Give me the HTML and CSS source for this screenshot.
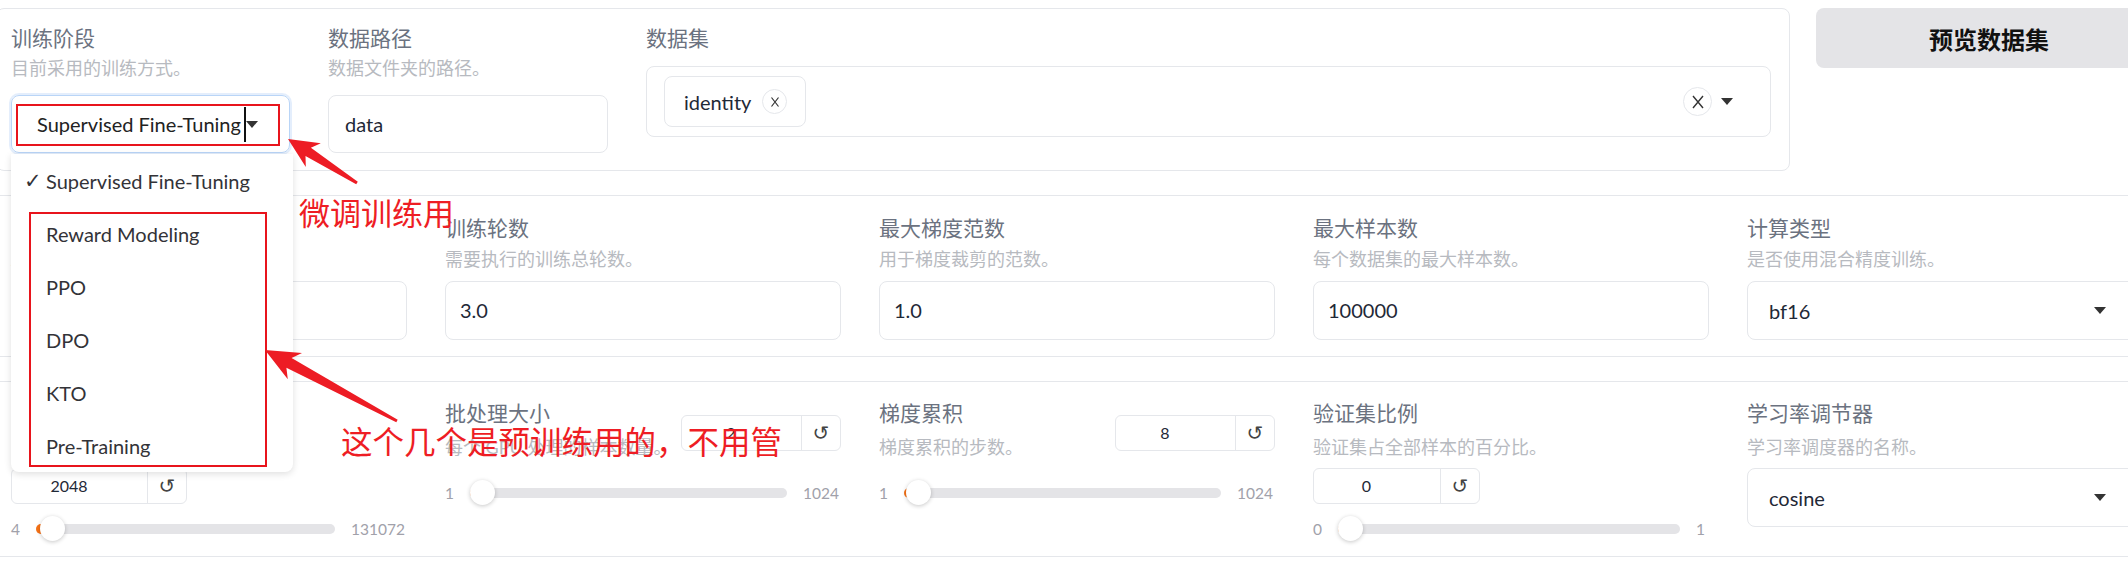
FILE: index.html
```html
<!DOCTYPE html>
<html lang="zh">
<head>
<meta charset="utf-8">
<title>Train</title>
<link rel="stylesheet" href="styles.css">
</head>
<body>
<div class="page">
  <div class="top">
    <div class="form form-top">
      <div class="field c279">
        <div class="lbl">训练阶段</div>
        <div class="info">目前采用的训练方式。</div>
        <div class="select focused">
          <span class="sel-text">Supervised Fine-Tuning</span><span class="cursor"></span>
          <span class="caret"></span>
        </div>
      </div>
      <div class="field c280">
        <div class="lbl">数据路径</div>
        <div class="info">数据文件夹的路径。</div>
        <div class="text-in tall1">data</div>
      </div>
      <div class="field c1125">
        <div class="lbl">数据集</div>
        <div class="multi">
          <span class="chip"><span>identity</span><span class="chip-x"><svg width="10" height="12" viewBox="0 0 10 12"><path d="M1.5 1.5L8.5 10.5M8.5 1.5L1.5 10.5" stroke="#333" stroke-width="1.2" fill="none"/></svg></span></span>
          <span class="spacer"></span>
          <span class="clear"><svg width="14" height="16" viewBox="0 0 14 16"><path d="M2 2L12 14M12 2L2 14" stroke="#333" stroke-width="1.4" fill="none"/></svg></span>
          <span class="caret"></span>
        </div>
      </div>
    </div>
    <button class="btn">预览数据集</button>
  </div>

  <div class="form row2">
    <div class="field c396">
      <div class="lbl">学习率</div>
      <div class="info">AdamW 优化器的初始学习率。</div>
      <div class="text-in">5e-5</div>
    </div>
    <div class="field c396">
      <div class="lbl">训练轮数</div>
      <div class="info">需要执行的训练总轮数。</div>
      <div class="text-in">3.0</div>
    </div>
    <div class="field c396">
      <div class="lbl">最大梯度范数</div>
      <div class="info">用于梯度裁剪的范数。</div>
      <div class="text-in">1.0</div>
    </div>
    <div class="field c396">
      <div class="lbl">最大样本数</div>
      <div class="info">每个数据集的最大样本数。</div>
      <div class="text-in">100000</div>
    </div>
    <div class="field c396">
      <div class="lbl">计算类型</div>
      <div class="info">是否使用混合精度训练。</div>
      <div class="select">
        <span class="sel-text">bf16</span>
        <span class="caret"></span>
      </div>
    </div>
  </div>

  <div class="form row3">
    <div class="field c396">
      <div class="lbl">截断长度</div>
      <div class="info">输入序列分词后的最大长度。</div>
      <div class="numbox nb-a"><span class="num-val">2048</span><span class="reset">↺</span></div>
      <div class="slider s-low">
        <span class="smin">4</span>
        <div class="track" style="--f:0.0156"><div class="fill"></div><div class="thumb"></div></div>
        <span class="smax">131072</span>
      </div>
    </div>
    <div class="field c396">
      <div class="shead">
        <div>
          <div class="lbl">批处理大小</div>
          <div class="info">每个 GPU 处理的样本数量。</div>
        </div>
        <div class="numbox nb-b"><span class="num-val">2</span><span class="reset">↺</span></div>
      </div>
      <div class="slider s-top">
        <span class="smin">1</span>
        <div class="track" style="--f:0.001"><div class="fill"></div><div class="thumb"></div></div>
        <span class="smax">1024</span>
      </div>
    </div>
    <div class="field c396">
      <div class="shead">
        <div>
          <div class="lbl">梯度累积</div>
          <div class="info">梯度累积的步数。</div>
        </div>
        <div class="numbox nb-b"><span class="num-val">8</span><span class="reset">↺</span></div>
      </div>
      <div class="slider s-top">
        <span class="smin">1</span>
        <div class="track" style="--f:0.0068"><div class="fill"></div><div class="thumb"></div></div>
        <span class="smax">1024</span>
      </div>
    </div>
    <div class="field c396">
      <div class="lbl">验证集比例</div>
      <div class="info">验证集占全部样本的百分比。</div>
      <div class="numbox nb-c"><span class="num-val">0</span><span class="reset">↺</span></div>
      <div class="slider s-low s-short">
        <span class="smin">0</span>
        <div class="track" style="--f:0"><div class="fill"></div><div class="thumb"></div></div>
        <span class="smax">1</span>
      </div>
    </div>
    <div class="field c396">
      <div class="lbl">学习率调节器</div>
      <div class="info">学习率调度器的名称。</div>
      <div class="select sel-low">
        <span class="sel-text">cosine</span>
        <span class="caret"></span>
      </div>
    </div>
  </div>
</div>

<div class="menu">
  <div class="opt"><span class="chk">✓</span>Supervised Fine-Tuning</div>
  <div class="opt"><span class="chk"></span>Reward Modeling</div>
  <div class="opt"><span class="chk"></span>PPO</div>
  <div class="opt"><span class="chk"></span>DPO</div>
  <div class="opt"><span class="chk"></span>KTO</div>
  <div class="opt"><span class="chk"></span>Pre-Training</div>
</div>

<div class="mark mark1"></div>
<div class="mark mark2"></div>

<svg class="arrows" width="2128" height="564" viewBox="0 0 2128 564">
  <polygon points="288,139 320.8,143.3 310.9,147.7 357.8,181.7 356.2,184.3 305.5,156.1 305.8,166.9" fill="#ed1c24"/>
  <polygon points="265,350 302,352.9 291.6,358.1 397.7,419.7 396.3,422.3 286.4,367.7 287.8,379.3" fill="#ed1c24"/>
</svg>

<div class="note note1">微调训练用</div>
<div class="note note2">这个几个是预训练用的，不用管</div>
</body>
</html>
```

FILE: styles.css
```css
* { box-sizing: border-box; }

body {
  margin: 0;
  width: 2128px;
  height: 564px;
  overflow: hidden;
  position: relative;
  background: #fff;
  font-family: Lato, "Noto Sans CJK SC", sans-serif;
  color: #1f2937;
}

.page {
  width: 2180px;
  margin-left: -4px;
  padding-top: 8px;
}

.top {
  display: flex;
  align-items: flex-start;
  gap: 26px;
}

.form {
  border: 1px solid #e5e7eb;
  background: #fff;
  display: flex;
  align-items: flex-start;
  gap: 38px;
}

.form-top {
  flex: none;
  width: 1794px;
  height: 163px;
  border-radius: 8px;
  padding: 16px 18px 0 14px;
}

.btn {
  flex: none;
  width: 346px;
  height: 60px;
  padding: 0;
  border: none;
  border-radius: 8px;
  background: #e4e4e7;
  color: #111;
  font-family: "Noto Sans CJK SC", sans-serif;
  font-weight: 700;
  font-size: 24px;
}

.row2 {
  width: 2180px;
  margin-top: 24px;
  padding: 19px 0 16px 14px;
}

.row3 {
  width: 2180px;
  margin-top: 24px;
  padding: 18px 0 15px 14px;
}

.field { flex: none; }
.c279 { width: 279px; }
.c280 { width: 280px; }
.c1125 { width: 1125px; }
.c396 { width: 396px; }

.lbl {
  font-size: 21px;
  line-height: 26px;
  color: #6b7280;
  white-space: nowrap;
}

.info {
  font-size: 18px;
  line-height: 22px;
  color: #b7bac0;
  white-space: nowrap;
}

.form-top .info { margin-top: 6px; }
.row2 .info { margin-top: 7px; }
.row3 .info { margin-top: 10px; }

/* text inputs */
.text-in {
  height: 59px;
  margin-top: 11px;
  border: 1px solid #e5e7eb;
  border-radius: 8px;
  padding-left: 14px;
  font-size: 20px;
  line-height: 57px;
  color: #1f2937;
}

.text-in.tall1 {
  height: 58px;
  margin-top: 16px;
  line-height: 56px;
  padding-left: 16px;
}

/* dropdowns */
.select {
  height: 59px;
  margin-top: 11px;
  border: 1px solid #e5e7eb;
  border-radius: 8px;
  display: flex;
  align-items: center;
  padding: 0 36px 0 21px;
  font-size: 20px;
  color: #1f2937;
}

.select .sel-text {
  flex: 1;
  white-space: nowrap;
  overflow: hidden;
}

.select.focused {
  height: 58px;
  margin-top: 16px;
  border-color: #b9d5f7;
  box-shadow: 0 0 0 2px rgba(205, 224, 250, 0.55);
  padding: 0 37px 0 25px;
}

.select.focused .sel-text { flex: none; color: #222; }

.cursor {
  flex: none;
  width: 2px;
  height: 35px;
  margin-left: 3px;
  background: #111;
}

.select.focused .caret { margin-left: auto; }

.select.sel-low { margin-top: 10px; }

.caret {
  flex: none;
  width: 0;
  height: 0;
  border-left: 6px solid transparent;
  border-right: 6px solid transparent;
  border-top: 7px solid #333;
}

/* multiselect */
.multi {
  height: 71px;
  margin-top: 15px;
  border: 1px solid #e5e7eb;
  border-radius: 8px;
  display: flex;
  align-items: center;
  padding: 0 37px 0 17px;
}

.chip {
  height: 51px;
  display: flex;
  align-items: center;
  gap: 11px;
  padding: 0 18px 0 19px;
  border: 1px solid #e5e7eb;
  border-radius: 8px;
  font-size: 20px;
  color: #1f2937;
}

.chip-x {
  width: 25px;
  height: 25px;
  border: 1px solid #e5e7eb;
  border-radius: 50%;
  display: flex;
  align-items: center;
  justify-content: center;
}

.spacer { flex: 1; }

.clear {
  width: 29px;
  height: 29px;
  margin-right: 9px;
  border: 1px solid #e5e7eb;
  border-radius: 50%;
  display: flex;
  align-items: center;
  justify-content: center;
}

/* number box with reset */
.numbox {
  height: 36px;
  border: 1px solid #e5e7eb;
  border-radius: 6px;
  display: flex;
  background: #fff;
}

.nb-a { width: 176px; margin-top: 10px; }
.nb-b { width: 160px; }
.nb-c { width: 167px; margin-top: 10px; }

.num-val {
  flex: 1;
  text-align: center;
  padding-right: 21px;
  font-size: 16px;
  line-height: 34px;
  color: #1f2937;
}

.reset {
  flex: none;
  width: 39px;
  border-left: 1px solid #e5e7eb;
  text-align: center;
  font-family: "DejaVu Sans", sans-serif;
  font-size: 20px;
  line-height: 34px;
  color: #444;
}

.shead {
  display: flex;
  justify-content: space-between;
  align-items: flex-start;
}

.shead .numbox { margin-top: 15px; }

/* sliders */
.slider {
  height: 25px;
  display: flex;
  align-items: center;
  gap: 16px;
  padding-right: 2px;
  font-size: 15.5px;
  color: #a1a1aa;
}

.s-top { margin-top: 22px; }
.s-low { margin-top: 12px; }
.s-short { padding-right: 4px; }

.track {
  flex: 1;
  position: relative;
  height: 10px;
  border-radius: 5px;
  background: #e4e4e7;
}

.fill {
  position: absolute;
  left: 0;
  top: 0;
  bottom: 0;
  width: calc(12.5px + var(--f) * (100% - 25px));
  border-radius: 5px;
  background: #f97316;
}

.thumb {
  position: absolute;
  top: 50%;
  left: calc(var(--f) * (100% - 25px));
  width: 25px;
  height: 25px;
  margin-top: -12.5px;
  border-radius: 50%;
  background: #fff;
  box-shadow: 0 1px 4px rgba(0, 0, 0, 0.22);
}

/* open dropdown menu */
.menu {
  position: absolute;
  left: 11px;
  top: 154px;
  width: 282px;
  background: #fff;
  border-radius: 0 0 8px 8px;
  box-shadow: 0 2px 7px rgba(0, 0, 0, 0.13);
}

.opt {
  height: 53px;
  display: flex;
  align-items: center;
  padding-left: 13px;
  font-size: 20px;
  color: #333338;
  white-space: nowrap;
}

.chk {
  flex: none;
  width: 22px;
  font-family: "DejaVu Sans", sans-serif;
  font-size: 21px;
}

/* annotations */
.mark {
  position: absolute;
  border: 2px solid #e8141c;
}

.mark1 { left: 16px; top: 104px; width: 264px; height: 42px; }
.mark2 { left: 29px; top: 212px; width: 238px; height: 255px; }

.arrows {
  position: absolute;
  left: 0;
  top: 0;
  pointer-events: none;
}

.note {
  position: absolute;
  font-family: "Noto Sans CJK SC", sans-serif;
  line-height: 1;
  color: #ee1d24;
  white-space: nowrap;
}

.note1 { left: 299px; top: 196px; font-size: 31px; }
.note2 { left: 341px; top: 425px; font-size: 31.5px; }
```
